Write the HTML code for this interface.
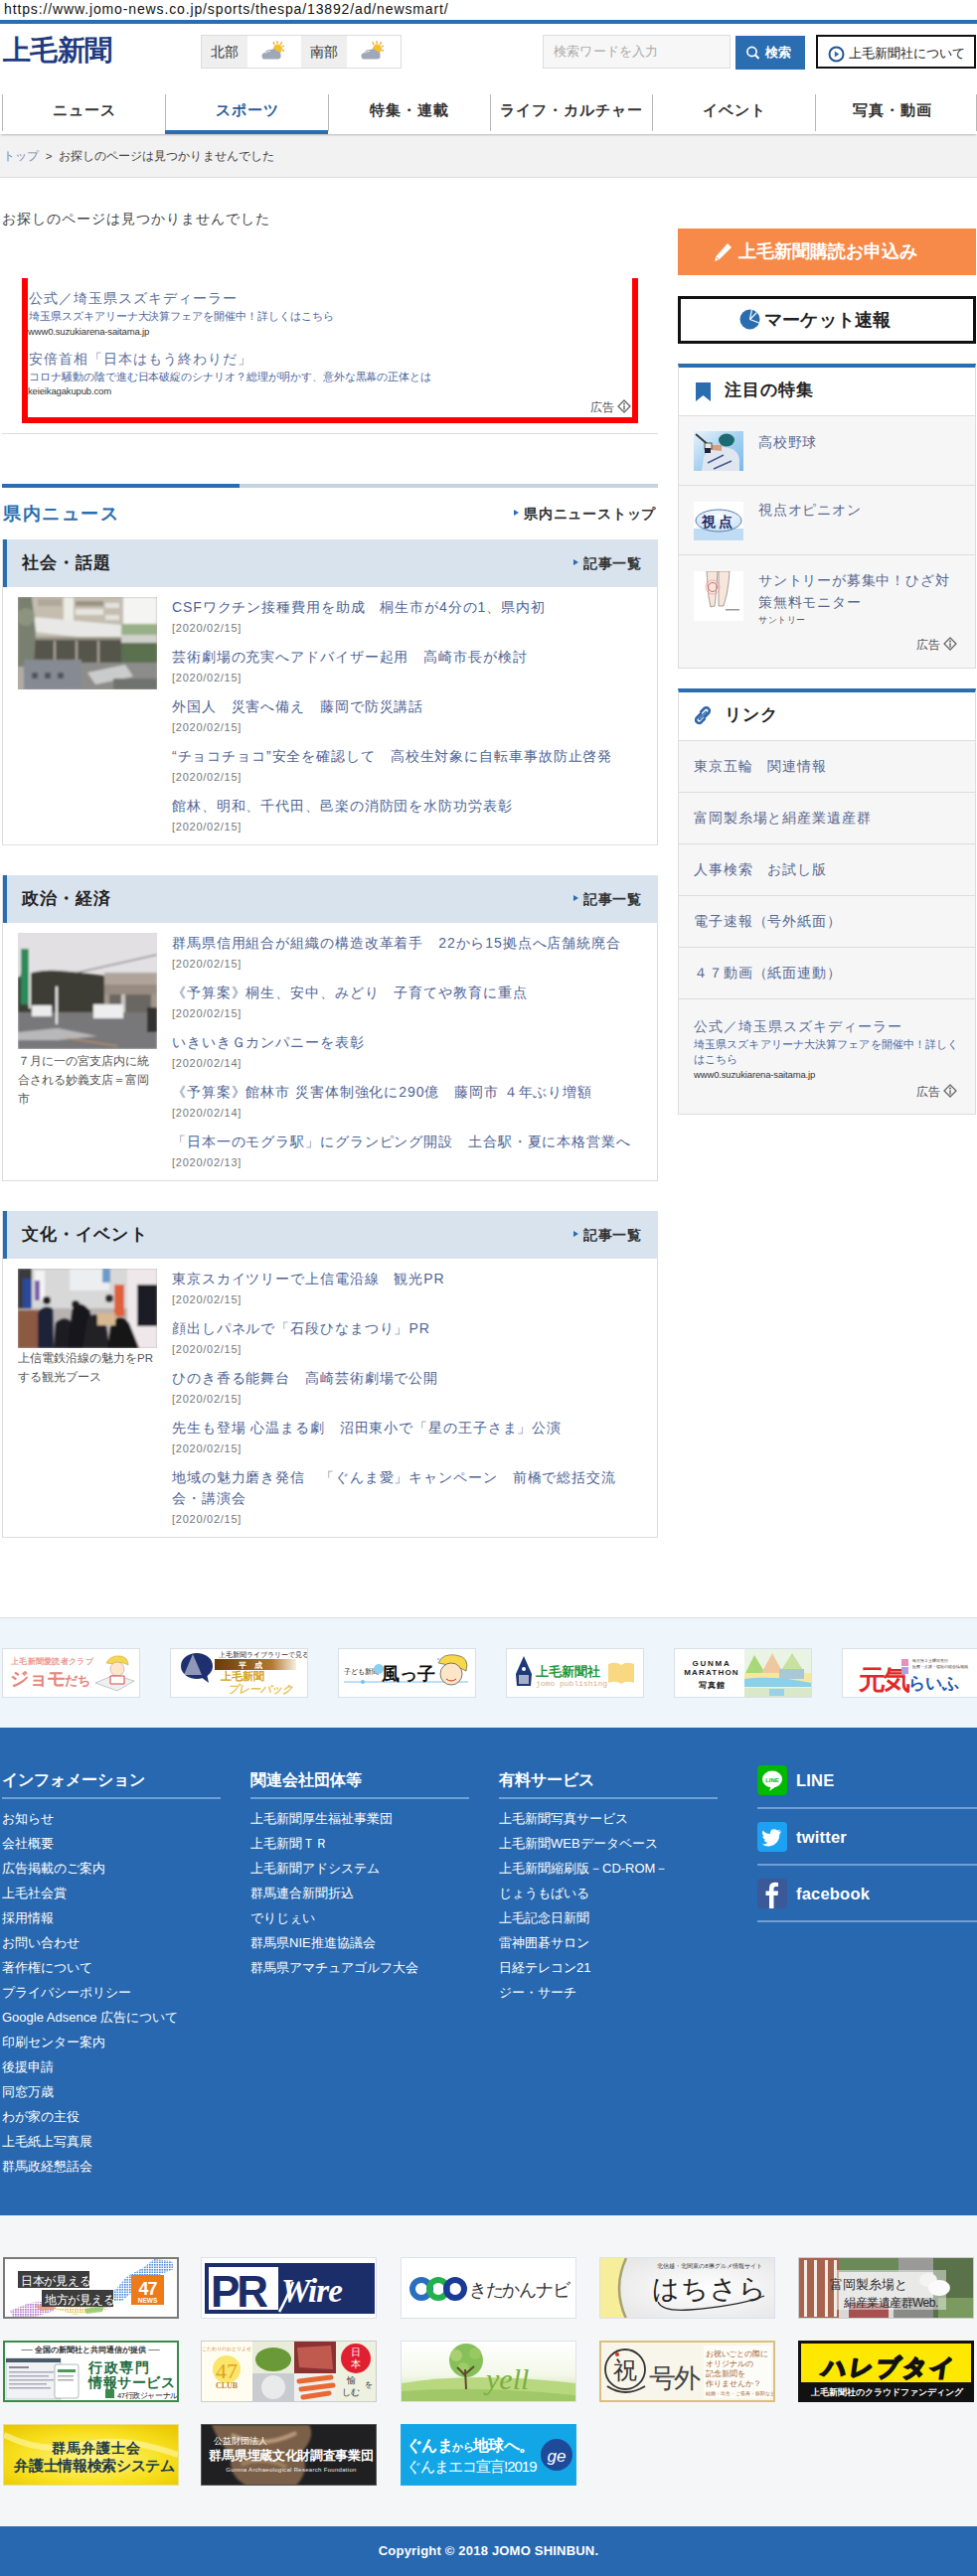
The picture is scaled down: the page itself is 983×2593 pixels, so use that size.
<!DOCTYPE html>
<html lang="ja">
<head>
<meta charset="utf-8">
<style>
*{box-sizing:border-box;margin:0;padding:0}
html,body{width:983px;height:2593px;overflow:hidden;background:#fff}
body{position:relative;font-family:"Liberation Sans",sans-serif;color:#333}
.abs{position:absolute}
a{text-decoration:none;color:inherit}
/* header */
#url{left:4px;top:1px;font-size:14px;color:#111;white-space:nowrap;letter-spacing:.87px}
#topline{left:0;top:20px;width:983px;height:4px;background:#2a6db0}
#logo{left:3px;top:32px;font-size:28px;font-weight:bold;color:#1e3a80;letter-spacing:-.6px;line-height:38px;white-space:nowrap}
#weather{left:202px;top:35px;width:202px;height:34px;border:1px solid #ddd;display:flex}
#weather .lb{width:47px;background:#efefef;font-size:14px;color:#333;text-align:center;line-height:32px}
#weather .ic{width:54px;background:#fff;position:relative}
#search{left:546px;top:35px;width:189px;height:34px;border:1px solid #ddd;background:#f7f7f7;font-size:13px;color:#aaa;padding-left:10px;line-height:32px;letter-spacing:.2px}
#sbtn{left:740px;top:36px;width:70px;height:34px;background:#2a6db0;color:#fff;font-size:13px;font-weight:bold;line-height:34px;padding-left:30px}
#about{left:821px;top:35px;width:161px;height:34px;border:2px solid #111;font-size:13px;color:#222;line-height:33px;padding-left:31px;letter-spacing:0;white-space:nowrap}
/* nav */
#nav{left:0;top:93px;width:983px;height:42px;background:#fff;box-shadow:0 2px 2px -1px rgba(0,0,0,.25);z-index:2}
#nav .it{position:absolute;top:0;height:42px;font-size:15px;font-weight:bold;color:#333;text-align:center;line-height:36px;letter-spacing:1px}
#nav .sep{position:absolute;top:2px;width:1px;height:37px;background:#b8b8b8}
#crumb{left:0;top:135px;width:983px;height:44px;background:#f2f2f2;border-bottom:1px solid #dcdcdc;font-size:11.5px;line-height:44px;padding-left:3px;color:#444;letter-spacing:.05px}
#crumb .t{color:#7a88a8}
#nf{left:2px;top:212px;font-size:14px;color:#444;letter-spacing:1px}

/* main */
#adbox{left:22px;top:280px;width:620px;height:146px;border:6px solid #f00;border-top:none}
.adt{position:absolute;left:1px;font-size:14px;color:#5b6f9b;letter-spacing:1px;white-space:nowrap}
.add{position:absolute;left:1px;font-size:10.5px;color:#4a66a0;letter-spacing:-.05px;white-space:nowrap}
.adu{position:absolute;left:0;font-size:9.5px;color:#333;white-space:nowrap;letter-spacing:-.15px}
.adk{position:absolute;font-size:12px;color:#555;white-space:nowrap}
.iico{display:inline-block;vertical-align:middle}
#hr1{left:2px;top:436px;width:660px;height:1px;background:#ddd}
#tabl{left:2px;top:487px;width:660px;height:4px;background:#c5d3e0}
#tabd{left:2px;top:487px;width:239px;height:4px;background:#2a6db0}
#kn{left:3px;top:505px;font-size:18px;font-weight:bold;color:#2a6db0;letter-spacing:1.5px}
#kntop{left:517px;top:509px;font-size:14px;font-weight:bold;color:#333;letter-spacing:.8px}
.tri{display:inline-block;width:0;height:0;border-left:5px solid #2a6db0;border-top:3.5px solid transparent;border-bottom:3.5px solid transparent;vertical-align:middle;margin-right:5px;position:relative;top:-2px}
.sec{position:absolute;left:2px;width:660px;border:1px solid #ddd;border-top:none;background:#fff}
.sech{position:absolute;left:0;top:0;width:659px;height:48px;background:#d8e3ee;border-left:4px solid #2a6db0}
.sech .ttl{position:absolute;left:15px;top:0;line-height:48px;font-size:17px;font-weight:bold;color:#222;letter-spacing:1.1px}
.sech .more{position:absolute;right:17px;top:0;line-height:48px;font-size:14px;font-weight:bold;color:#333;letter-spacing:.5px}
.ni{position:absolute;left:170px;width:480px}
.ni .t{font-size:14px;color:#4e6495;letter-spacing:.9px;line-height:21px;white-space:nowrap}
.ni .d{font-size:11px;color:#777;line-height:16px;letter-spacing:.75px;padding-top:2px}
.thumb{position:absolute;left:15px;width:140px;overflow:hidden}
.cap{position:absolute;left:15px;width:142px;font-size:11.5px;color:#555;line-height:19px;letter-spacing:0}

/* sidebar */
#sub{left:682px;top:230px;width:300px;height:47px;background:#f78a48;color:#fff;font-size:18px;font-weight:bold;line-height:47px;padding-left:61px;letter-spacing:.05px}
#mkt{left:682px;top:298px;width:300px;height:48px;border:3px solid #111;color:#222;font-size:18px;font-weight:bold;line-height:42px;padding-left:84px;letter-spacing:.2px}
.box{position:absolute;left:682px;width:300px;border:1px solid #ddd;border-top:4px solid #2a6db0;background:#f6f6f7}
.boxh{position:absolute;left:0;top:0;width:298px;height:48px;background:#fff;border-bottom:1px solid #ddd}
.boxh .ttl{position:absolute;left:46px;top:0;line-height:46px;font-size:17px;font-weight:bold;color:#222;letter-spacing:.9px}
.fi{position:absolute;left:0;width:298px;border-bottom:1px solid #ddd}
.fi .im{position:absolute;left:15px;width:50px;overflow:hidden}
.fi .tx{position:absolute;left:80px;font-size:14px;color:#566890;letter-spacing:.8px;line-height:21px}
.li{position:absolute;left:0;width:298px;height:52px;border-bottom:1px solid #ddd;font-size:14px;color:#566890;line-height:50px;padding-left:15px;letter-spacing:.9px}

/* banners strip */
#bstrip{left:0;top:1628px;width:983px;height:111px;background:#eef5fb;border-top:1px solid #d8e2ea}
.bn{position:absolute;top:30px;width:139px;height:50px;background:#fff;border:1px solid #d8e0e8;overflow:hidden}
/* footer */
#foot{left:0;top:1739px;width:983px;height:491px;background:#2868b0;color:#fff}
.fc{position:absolute;top:0;width:220px}
.fc .h{position:absolute;left:0;top:43px;font-size:16px;font-weight:bold;letter-spacing:0;white-space:nowrap}
.fc .ln{position:absolute;left:0;top:70px;width:220px;height:2px;background:#6f9fd6}
.fc ul{position:absolute;left:0;top:79px;list-style:none}
.fc li{font-size:13px;line-height:25px;letter-spacing:0;white-space:nowrap}
.sn{position:absolute;left:762px;width:221px;height:44px;border-bottom:2px solid #6f9fd6}
.sn .ic{position:absolute;left:0;top:0;width:30px;height:30px;border-radius:4px}
.sn .tx{position:absolute;left:39px;top:2px;font-size:16.5px;font-weight:bold;line-height:26px;letter-spacing:.2px}
#gray{left:0;top:2230px;width:983px;height:313px;background:#f5f6f8}
.bb{position:absolute;width:177px;height:62px;overflow:hidden;border:1px solid #dcdcdc;background:#fff}
#copy{left:0;top:2543px;width:983px;height:50px;background:#2868b0;color:#fff;font-size:13px;font-weight:bold;text-align:center;line-height:50px;letter-spacing:.2px;padding-left:0}
</style>
</head>
<body>
<div id="url" class="abs">https://www.jomo-news.co.jp/sports/thespa/13892/ad/newsmart/</div>
<div id="topline" class="abs"></div>
<div id="logo" class="abs">上毛新聞</div>
<div id="weather" class="abs">
  <div class="lb">北部</div><div class="ic"><svg width="54" height="32" viewBox="0 0 54 32"><g stroke="#f0a838" stroke-width="1.3"><line x1="30" y1="5" x2="30" y2="8"/><line x1="34.5" y1="6" x2="33.5" y2="9"/><line x1="26" y1="6" x2="27" y2="9"/><line x1="37" y1="10" x2="35" y2="11"/><line x1="37" y1="15" x2="35" y2="14.5"/></g><circle cx="30.5" cy="13" r="4.5" fill="#f6c030"/><path d="M15 22.5 Q13 18 17.5 17 Q19 13.5 23.5 14 Q27 12 30 15.5 Q34 16 33.5 20 Q34 23 31 23.5 L17 23.5 Q15 23.5 15 22.5 Z" fill="#a0a8b8"/><path d="M18 17.5 Q20 15 23 15.5" stroke="#e8ecf2" stroke-width="1" fill="none"/></svg></div>
  <div class="lb">南部</div><div class="ic"><svg width="54" height="32" viewBox="0 0 54 32"><g stroke="#f0a838" stroke-width="1.3"><line x1="30" y1="5" x2="30" y2="8"/><line x1="34.5" y1="6" x2="33.5" y2="9"/><line x1="26" y1="6" x2="27" y2="9"/><line x1="37" y1="10" x2="35" y2="11"/><line x1="37" y1="15" x2="35" y2="14.5"/></g><circle cx="30.5" cy="13" r="4.5" fill="#f6c030"/><path d="M15 22.5 Q13 18 17.5 17 Q19 13.5 23.5 14 Q27 12 30 15.5 Q34 16 33.5 20 Q34 23 31 23.5 L17 23.5 Q15 23.5 15 22.5 Z" fill="#a0a8b8"/><path d="M18 17.5 Q20 15 23 15.5" stroke="#e8ecf2" stroke-width="1" fill="none"/></svg></div>
</div>
<div id="search" class="abs">検索ワードを入力</div>
<div id="sbtn" class="abs"><svg class="abs" style="left:10px;top:9px" width="17" height="17" viewBox="0 0 17 17"><circle cx="6.5" cy="7" r="4.6" fill="none" stroke="#fff" stroke-width="1.7"/><line x1="10" y1="10.5" x2="13.5" y2="14" stroke="#fff" stroke-width="2"/></svg>検索</div>
<div id="about" class="abs"><svg class="abs" style="left:10px;top:9px" width="17" height="17" viewBox="0 0 17 17"><circle cx="8.5" cy="8.5" r="7" fill="none" stroke="#25558f" stroke-width="2"/><path d="M6.8 5.6 L11.3 8.5 L6.8 11.4 Z" fill="#2a6db0"/></svg>上毛新聞社について</div>

<div id="nav" class="abs">
  <div class="sep" style="left:2px"></div>
  <div class="it" style="left:3px;width:163px">ニュース</div>
  <div class="sep" style="left:166px"></div>
  <div class="it" style="left:167px;width:163px;color:#2a5a9a">スポーツ</div>
  <div class="abs" style="left:166px;top:38px;width:164px;height:4px;background:#2a6db0"></div>
  <div class="sep" style="left:330px"></div>
  <div class="it" style="left:331px;width:162px">特集・連載</div>
  <div class="sep" style="left:493px"></div>
  <div class="it" style="left:494px;width:162px">ライフ・カルチャー</div>
  <div class="sep" style="left:656px"></div>
  <div class="it" style="left:657px;width:163px">イベント</div>
  <div class="sep" style="left:820px"></div>
  <div class="it" style="left:818px;width:159px">写真・動画</div>
  <div class="sep" style="left:982px"></div>
</div>
<div id="crumb" class="abs"><span class="t">トップ</span>&nbsp;&nbsp;&gt;&nbsp;&nbsp;お探しのページは見つかりませんでした</div>
<div id="nf" class="abs">お探しのページは見つかりませんでした</div>


<div id="adbox" class="abs">
  <div class="adt" style="top:12px">公式／埼玉県スズキディーラー</div>
  <div class="add" style="top:32px">埼玉県スズキアリーナ大決算フェアを開催中！詳しくはこちら</div>
  <div class="adu" style="top:48px">www0.suzukiarena-saitama.jp</div>
  <div class="adt" style="top:73px">安倍首相「日本はもう終わりだ」</div>
  <div class="add" style="top:93px">コロナ騒動の陰で進む日本破綻のシナリオ？総理が明かす、意外な黒幕の正体とは</div>
  <div class="adu" style="top:108px">keieikagakupub.com</div>
  <div class="adk" style="left:566px;top:122px">広告 <svg class="iico" width="14" height="14" viewBox="0 0 14 14" style="margin-top:-3px"><path d="M7 1 L13 7 L7 13 L1 7 Z" fill="none" stroke="#666" stroke-width="1.3" stroke-linejoin="round"/><circle cx="7" cy="4.5" r="1" fill="#666"/><rect x="6.3" y="6.2" width="1.4" height="4.5" fill="#666"/></svg></div>
</div>
<div id="hr1" class="abs"></div>
<div id="tabl" class="abs"></div>
<div id="tabd" class="abs"></div>
<div id="kn" class="abs">県内ニュース</div>
<div id="kntop" class="abs"><span class="tri"></span>県内ニューストップ</div>

<!-- section 1 -->
<div class="sec" style="top:543px;height:308px">
  <div class="sech"><div class="ttl">社会・話題</div><div class="more"><span class="tri"></span>記事一覧</div></div>
  <div class="thumb" style="top:58px;height:93px">
    <svg width="140" height="93" viewBox="0 0 140 93"><defs><filter id="b1" x="0" y="0" width="100%" height="100%"><feGaussianBlur stdDeviation="0.9"/></filter></defs>
      <rect width="140" height="93" fill="#b0aca4"/>
      <g filter="url(#b1)">
      <rect x="100" y="0" width="40" height="40" fill="#f4f4f2"/>
      <rect x="0" y="0" width="106" height="42" fill="#c4bdb0"/>
      <rect x="46" y="0" width="10" height="30" fill="#ecebe6"/>
      <rect x="20" y="2" width="24" height="7" fill="#b0a898"/>
      <rect x="58" y="4" width="28" height="5" fill="#9a9282"/>
      <rect x="58" y="12" width="28" height="6" fill="#e6e4de"/>
      <rect x="88" y="6" width="14" height="5" fill="#e4e2dc"/>
      <rect x="88" y="18" width="14" height="5" fill="#e4e2dc"/>
      <path d="M16 20 L104 28 L104 45 L16 35 Z" fill="#e8e8e6"/>
      <rect x="14" y="40" width="92" height="27" fill="#57544c"/>
      <rect x="16" y="40" width="88" height="3" fill="#9a958a"/>
      <rect x="36" y="44" width="2" height="24" fill="#aaa69c"/>
      <rect x="58" y="44" width="2" height="24" fill="#aaa69c"/>
      <rect x="80" y="44" width="2" height="24" fill="#aaa69c"/>
      <rect x="104" y="38" width="36" height="8" fill="#d0d0cc"/>
      <rect x="104" y="46" width="36" height="24" fill="#5a7050"/>
      <rect x="104" y="27" width="36" height="11" fill="#98b088"/>
      <path d="M0 0 L14 0 L18 35 L16 70 L0 70 Z" fill="#7a8070"/>
      <circle cx="8" cy="20" r="9" fill="#8c9480"/>
      <rect x="6" y="63" width="58" height="30" fill="#868a92"/>
      <rect x="14" y="76" width="6" height="6" fill="#505460"/><rect x="27" y="76" width="6" height="6" fill="#505460"/><rect x="40" y="76" width="6" height="6" fill="#505460"/>
      <rect x="64" y="66" width="76" height="27" fill="#8c8c8a"/>
      <path d="M70 76 L108 68 L116 80 L78 88 Z" fill="#cacccc"/>
      <rect x="96" y="82" width="44" height="11" fill="#707270"/>
      </g></svg>
  </div>
  <div class="ni" style="top:58px"><div class="t">CSFワクチン接種費用を助成　桐生市が4分の1、県内初</div><div class="d">[2020/02/15]</div></div>
  <div class="ni" style="top:108px"><div class="t">芸術劇場の充実へアドバイザー起用　高崎市長が検討</div><div class="d">[2020/02/15]</div></div>
  <div class="ni" style="top:158px"><div class="t">外国人　災害へ備え　藤岡で防災講話</div><div class="d">[2020/02/15]</div></div>
  <div class="ni" style="top:208px"><div class="t">“チョコチョコ”安全を確認して　高校生対象に自転車事故防止啓発</div><div class="d">[2020/02/15]</div></div>
  <div class="ni" style="top:258px"><div class="t">館林、明和、千代田、邑楽の消防団を水防功労表彰</div><div class="d">[2020/02/15]</div></div>
</div>

<!-- section 2 -->
<div class="sec" style="top:881px;height:308px">
  <div class="sech"><div class="ttl">政治・経済</div><div class="more"><span class="tri"></span>記事一覧</div></div>
  <div class="thumb" style="top:58px;height:117px">
    <svg width="140" height="117" viewBox="0 0 140 117"><defs><filter id="b2" x="0" y="0" width="100%" height="100%"><feGaussianBlur stdDeviation="0.8"/></filter></defs>
      <rect width="140" height="117" fill="#dedcde"/>
      <g filter="url(#b2)">
      <rect width="140" height="40" fill="#e2e0e2"/>
      <path d="M60 40 L140 22" stroke="#555" stroke-width="1"/>
      <path d="M0 45 Q20 36 40 38 Q70 40 105 46 L105 82 L0 82 Z" fill="#3c3d36"/>
      <rect x="87" y="40" width="53" height="47" fill="#a2968c"/>
      <rect x="87" y="40" width="53" height="12" fill="#b0a49a"/>
      <rect x="87" y="52" width="53" height="10" fill="#988c82"/>
      <rect x="92" y="62" width="42" height="25" fill="#6a6662"/>
      <rect x="104" y="62" width="4" height="25" fill="#c8c4c0"/>
      <rect x="3" y="16" width="10" height="56" fill="#2a8a5a"/>
      <rect x="11" y="16" width="2" height="60" fill="#e8e8e8"/>
      <rect x="0" y="80" width="140" height="37" fill="#78787a"/>
      <rect x="14" y="73" width="20" height="11" fill="#ececec"/>
      <rect x="76" y="72" width="30" height="14" fill="#eeeeee"/>
      <rect x="38" y="54" width="2" height="38" fill="#f0f0f0"/>
      <path d="M0 100 L40 96 L80 104 L40 108 L0 108 Z" fill="#b8b8ba"/>
      <path d="M50 106 L100 114" stroke="#c89a60" stroke-width="1.2"/>
      <rect x="130" y="75" width="10" height="25" fill="#333"/>
      </g></svg>
  </div>
  <div class="cap" style="top:178px">７月に一の宮支店内に統合される妙義支店＝富岡市</div>
  <div class="ni" style="top:58px"><div class="t">群馬県信用組合が組織の構造改革着手　22から15拠点へ店舗統廃合</div><div class="d">[2020/02/15]</div></div>
  <div class="ni" style="top:108px"><div class="t">《予算案》桐生、安中、みどり　子育てや教育に重点</div><div class="d">[2020/02/15]</div></div>
  <div class="ni" style="top:158px"><div class="t">いきいきＧカンパニーを表彰</div><div class="d">[2020/02/14]</div></div>
  <div class="ni" style="top:208px"><div class="t">《予算案》館林市 災害体制強化に290億　藤岡市 ４年ぶり増額</div><div class="d">[2020/02/14]</div></div>
  <div class="ni" style="top:258px"><div class="t">「日本一のモグラ駅」にグランピング開設　土合駅・夏に本格営業へ</div><div class="d">[2020/02/13]</div></div>
</div>

<!-- section 3 -->
<div class="sec" style="top:1219px;height:329px">
  <div class="sech"><div class="ttl">文化・イベント</div><div class="more"><span class="tri"></span>記事一覧</div></div>
  <div class="thumb" style="top:58px;height:80px">
    <svg width="140" height="80" viewBox="0 0 140 80"><defs><filter id="b3" x="0" y="0" width="100%" height="100%"><feGaussianBlur stdDeviation="0.8"/></filter></defs>
      <rect width="140" height="80" fill="#b8b2b0"/>
      <g filter="url(#b3)">
      <rect x="0" y="0" width="140" height="40" fill="#d8d8d8"/>
      <rect x="0" y="0" width="14" height="40" fill="#3a3a3c"/>
      <rect x="17" y="2" width="10" height="30" fill="#f4f4f4"/>
      <rect x="52" y="0" width="40" height="22" fill="#eceef0"/>
      <rect x="85" y="0" width="8" height="14" fill="#6a9ac8"/>
      <rect x="110" y="0" width="30" height="80" fill="#eee8ea"/>
      <rect x="120" y="16" width="20" height="42" fill="#1c1e28"/>
      <rect x="5" y="10" width="9" height="30" fill="#2a4a9a"/>
      <rect x="17" y="12" width="5" height="20" fill="#7a5aa8"/>
      <rect x="97" y="16" width="10" height="32" fill="#e0603a"/>
      <rect x="0" y="42" width="25" height="38" fill="#8c5a42"/>
      <path d="M20 80 L20 45 Q25 35 35 40 L36 80 Z" fill="#1e2438"/>
      <path d="M36 80 L38 55 Q47 46 55 55 L56 80 Z" fill="#1a1c24"/>
      <path d="M50 80 L55 40 Q63 30 72 42 L80 80 Z" fill="#15161a"/>
      <path d="M65 80 L70 50 Q78 42 88 52 L92 80 Z" fill="#202026"/>
      <path d="M90 80 L94 55 Q103 44 112 55 L122 80 Z" fill="#141418"/>
      <rect x="80" y="45" width="18" height="12" fill="#d8b890"/>
      <circle cx="92" cy="30" r="4" fill="#2a2a2a"/>
      <circle cx="58" cy="36" r="4" fill="#1e1e1e"/>
      <circle cx="29" cy="32" r="4" fill="#1e1e1e"/>
      </g></svg>
  </div>
  <div class="cap" style="top:139px">上信電鉄沿線の魅力をPRする観光ブース</div>
  <div class="ni" style="top:58px"><div class="t">東京スカイツリーで上信電沿線　観光PR</div><div class="d">[2020/02/15]</div></div>
  <div class="ni" style="top:108px"><div class="t">顔出しパネルで「石段ひなまつり」PR</div><div class="d">[2020/02/15]</div></div>
  <div class="ni" style="top:158px"><div class="t">ひのき香る能舞台　高崎芸術劇場で公開</div><div class="d">[2020/02/15]</div></div>
  <div class="ni" style="top:208px"><div class="t">先生も登場 心温まる劇　沼田東小で「星の王子さま」公演</div><div class="d">[2020/02/15]</div></div>
  <div class="ni" style="top:258px"><div class="t">地域の魅力磨き発信　「ぐんま愛」キャンペーン　前橋で総括交流<br>会・講演会</div><div class="d">[2020/02/15]</div></div>
</div>

<!-- sidebar -->
<div id="sub" class="abs"><svg class="abs" style="left:36px;top:14px" width="19" height="20" viewBox="0 0 19 20"><path d="M14 1 L18 5 L6 17 L1 19 L2.5 14 Z" fill="#fff"/><path d="M3 15 L5 17" stroke="#f78a48" stroke-width="1"/></svg>上毛新聞購読お申込み</div>
<div id="mkt" class="abs"><svg class="abs" style="left:59px;top:10px" width="21" height="21" viewBox="0 0 21 21"><circle cx="10.5" cy="10.5" r="10" fill="#2a6db0"/><path d="M10.5 10.5 L12.5 0.7 M10.5 10.5 L17.5 3.5 M10.5 10.5 L19.8 14" stroke="#fff" stroke-width="1.2" fill="none"/></svg>マーケット速報</div>

<div class="box" style="top:366px;height:307px">
  <div class="boxh" style="height:49px"><svg class="abs" style="left:17px;top:15px" width="15" height="19" viewBox="0 0 15 19"><path d="M0 0 H15 V19 L7.5 13 L0 19 Z" fill="#2a6db0"/></svg><div class="ttl">注目の特集</div></div>
  <div class="fi" style="top:49px;height:70px">
    <div class="im" style="top:15px;height:40px"><svg width="50" height="40" viewBox="0 0 50 40"><defs><linearGradient id="sky" x1="0" y1="0" x2="1" y2="1"><stop offset="0" stop-color="#e8f2fa"/><stop offset=".5" stop-color="#a8d2f0"/><stop offset="1" stop-color="#7ab8ea"/></linearGradient><filter id="b4"><feGaussianBlur stdDeviation="0.5"/></filter></defs><rect width="50" height="40" fill="url(#sky)"/><g filter="url(#b4)"><path d="M8 40 L10 26 Q16 16 30 16 Q44 17 46 28 L46 40 Z" fill="#e0e6f0"/><path d="M14 32 L30 24 M20 38 L38 30" stroke="#4a5a8a" stroke-width="1.5"/><ellipse cx="33" cy="9" rx="8" ry="6.5" fill="#1e6a72"/><path d="M18 14 L28 14 L28 20 L18 19 Z" fill="#d8a080"/><path d="M2 3 L16 15" stroke="#3a3a3a" stroke-width="2"/><rect x="11" y="12" width="7" height="6" fill="#e8e8e8" stroke="#333" stroke-width=".8"/><rect x="11" y="17" width="6" height="5" fill="#223"/></g></svg></div>
    <div class="tx" style="top:16px">高校野球</div>
  </div>
  <div class="fi" style="top:119px;height:70px">
    <div class="im" style="top:16px;height:39px"><svg width="50" height="39" viewBox="0 0 50 39"><defs><radialGradient id="ov" cx=".5" cy=".3" r=".7"><stop offset="0" stop-color="#fafdff"/><stop offset="1" stop-color="#c8e0f4"/></radialGradient></defs><rect width="50" height="39" fill="#fff"/><rect x="0" y="27" width="50" height="12" fill="#c0dcf4"/><ellipse cx="25" cy="19" rx="23" ry="11" fill="url(#ov)" stroke="#5a80b0" stroke-width="1"/><text x="25" y="25" font-size="14" font-weight="bold" fill="#1e2a66" text-anchor="middle" font-family="Liberation Serif" letter-spacing="3">視点</text></svg></div>
    <div class="tx" style="top:14px">視点オピニオン</div>
  </div>
  <div class="fi" style="top:189px;height:114px;border-bottom:none">
    <div class="im" style="top:16px;height:50px"><svg width="50" height="50" viewBox="0 0 50 50"><rect width="50" height="50" fill="#fff"/><path d="M13 0 L24 0 L23 14 L22 26 L21 35 L17 36 L15 26 L14 14 Z" fill="#f6e6dc" stroke="#8a7a70" stroke-width=".7"/><path d="M25 0 L36 0 L35 12 L33 24 L30 35 L25 35 L25 24 Z" fill="#f6e6dc" stroke="#8a7a70" stroke-width=".7"/><circle cx="19" cy="16" r="7" fill="none" stroke="#f0a0a0" stroke-width=".8"/><circle cx="19" cy="16" r="4.5" fill="none" stroke="#e06868" stroke-width="1"/><rect x="32" y="38" width="14" height="1.5" fill="#999"/></svg></div>
    <div class="tx" style="top:14px;width:200px;line-height:22px">サントリーが募集中！ひざ対策無料モニター</div>
    <div class="abs" style="left:80px;top:59px;font-size:9px;color:#555;letter-spacing:.5px">サントリー</div>
    <div class="adk" style="left:239px;top:82px">広告 <svg class="iico" width="14" height="14" viewBox="0 0 14 14" style="margin-top:-3px"><path d="M7 1 L13 7 L7 13 L1 7 Z" fill="none" stroke="#666" stroke-width="1.3" stroke-linejoin="round"/><circle cx="7" cy="4.5" r="1" fill="#666"/><rect x="6.3" y="6.2" width="1.4" height="4.5" fill="#666"/></svg></div>
  </div>
</div>

<div class="box" style="top:693px;height:429px">
  <div class="boxh" style="height:49px"><svg class="abs" style="left:13px;top:12px" width="22" height="22" viewBox="0 0 20 20"><g fill="none" stroke="#2f66a8" stroke-width="2.4" stroke-linecap="round"><path d="M8.2 8.6 L4.6 12.2 A2.9 2.9 0 0 0 8.7 16.3 L11.6 13.4"/><path d="M12 11.4 L15.4 8 A2.9 2.9 0 0 0 11.3 3.9 L8.4 6.8"/><path d="M7.2 13.2 L13 7.4" stroke-width="2.6"/></g><path d="M7.3 13.1 L12.9 7.5" stroke="#bfe0ff" stroke-width=".6"/></svg><div class="ttl" style="left:46px">リンク</div></div>
  <div class="li" style="top:49px">東京五輪　関連情報</div>
  <div class="li" style="top:101px">富岡製糸場と絹産業遺産群</div>
  <div class="li" style="top:153px">人事検索　お試し版</div>
  <div class="li" style="top:205px">電子速報（号外紙面）</div>
  <div class="li" style="top:257px">４７動画（紙面連動）</div>
  <div class="fi" style="top:309px;height:116px;border-bottom:none">
    <div class="adt" style="left:15px;top:19px;color:#5b6f9b">公式／埼玉県スズキディーラー</div>
    <div class="add" style="left:15px;top:38px;line-height:15px;letter-spacing:.1px">埼玉県スズキアリーナ大決算フェアを開催中！詳しく<br>はこちら</div>
    <div class="adu" style="left:15px;top:70px">www0.suzukiarena-saitama.jp</div>
    <div class="adk" style="left:239px;top:85px">広告 <svg class="iico" width="14" height="14" viewBox="0 0 14 14" style="margin-top:-3px"><path d="M7 1 L13 7 L7 13 L1 7 Z" fill="none" stroke="#666" stroke-width="1.3" stroke-linejoin="round"/><circle cx="7" cy="4.5" r="1" fill="#666"/><rect x="6.3" y="6.2" width="1.4" height="4.5" fill="#666"/></svg></div>
  </div>
</div>

<!-- banner strip -->
<div id="bstrip" class="abs">
  <div class="bn" style="left:2px"><svg width="137" height="48" viewBox="0 0 137 48">
    <text x="8" y="15" font-size="7.5" font-weight="bold" fill="#ec9a90" letter-spacing=".3">上毛新聞愛読者クラブ</text>
    <text x="7" y="36" font-size="19" font-weight="bold" fill="#e8847a" letter-spacing="-.5">ジョモ</text>
    <text x="62" y="36" font-size="13" font-weight="bold" fill="#e8847a">だち</text>
    <path d="M93 34 L112 26 L132 32 L115 42 Z" fill="#eef0f2" stroke="#9aa" stroke-width=".6"/>
    <path d="M104 14 Q108 6 118 7 Q126 8 126 16 Q120 12 112 15 Z" fill="#f6d850" stroke="#c9a030" stroke-width=".6"/>
    <ellipse cx="115" cy="20" rx="7" ry="7" fill="#fde6cc" stroke="#b88" stroke-width=".5"/>
    <path d="M108 27 L122 27 L122 35 L108 35 Z" fill="#fff" stroke="#d44" stroke-width="1"/>
  </svg></div>
  <div class="bn" style="left:171px"><svg width="137" height="48" viewBox="0 0 137 48"><defs><linearGradient id="brn" x1="0" x2="1"><stop offset="0" stop-color="#6a3a08"/><stop offset=".7" stop-color="#b07a30"/><stop offset="1" stop-color="#f8f0e0"/></linearGradient></defs>
    <ellipse cx="26" cy="17" rx="16" ry="13" fill="#1e3070"/><path d="M30 28 L38 34 L36 25 Z" fill="#1e3070"/>
    <path d="M22 5 L31 26 L13 26 Z" fill="#fff" opacity=".5"/>
    <text x="48" y="8" font-size="7" fill="#222" font-family="Liberation Serif">上毛新聞ライブラリーで見る</text>
    <rect x="44" y="10" width="82" height="11" fill="url(#brn)"/>
    <text x="80" y="19" font-size="7.5" fill="#fff" text-anchor="middle" font-weight="bold">平　成</text>
    <text x="50" y="31" font-size="11" font-weight="bold" fill="#d4a020">上毛新聞</text>
    <text x="57" y="44" font-size="11" font-weight="bold" fill="#e8c050" font-style="italic">プレーバック</text>
  </svg></div>
  <div class="bn" style="left:340px"><svg width="137" height="48" viewBox="0 0 137 48">
    <line x1="5" y1="33" x2="130" y2="33" stroke="#7ac0ec" stroke-width="1"/>
    <circle cx="24" cy="33" r="2" fill="#7ac0ec"/><circle cx="100" cy="10" r="1" fill="#7ac0ec"/><circle cx="128" cy="14" r="1" fill="#7ac0ec"/>
    <text x="5" y="25" font-size="7" fill="#222">子ども新聞</text>
    <circle cx="40" cy="20" r="5" fill="#8ad0f0"/>
    <text x="43" y="31" font-size="18" font-weight="bold" fill="#111">風っ子</text>
    <path d="M100 14 Q104 4 118 6 Q132 8 128 22 L120 18 Z" fill="#f8d848" stroke="#444" stroke-width=".6"/>
    <ellipse cx="113" cy="25" rx="11" ry="11" fill="#fde6c8" stroke="#444" stroke-width=".7"/>
    <path d="M108 30 Q113 34 118 30" stroke="#c33" stroke-width="1" fill="none"/>
  </svg></div>
  <div class="bn" style="left:509px"><svg width="137" height="48" viewBox="0 0 137 48">
    <path d="M17 7 L25 25 L24 37 L10 37 L9 25 Z" fill="#1e3878"/>
    <rect x="12" y="26" width="10" height="9" fill="#fff" opacity=".6"/><circle cx="17" cy="20" r="2" fill="#fff"/>
    <text x="29" y="27" font-size="13" font-weight="bold" fill="#1a9a3a">上毛新聞社</text>
    <text x="29" y="37" font-size="8" fill="#d8b088" font-family="Liberation Mono">jomo publishing</text>
    <path d="M102 15 Q110 12 115 16 Q120 12 128 15 L128 34 Q120 31 115 35 Q110 31 102 34 Z" fill="#f8d880"/>
  </svg></div>
  <div class="bn" style="left:678px"><svg width="137" height="48" viewBox="0 0 137 48">
    <text x="37" y="17" font-size="8" font-weight="bold" fill="#222" text-anchor="middle" letter-spacing="1.8">GUNMA</text>
    <text x="37" y="26" font-size="8" font-weight="bold" fill="#222" text-anchor="middle" letter-spacing="1.2">MARATHON</text>
    <text x="37" y="39" font-size="7.5" font-weight="bold" fill="#222" text-anchor="middle" letter-spacing="1">写真館</text>
    <rect x="70" y="0" width="67" height="48" fill="#eaf4e4"/>
    <path d="M70 26 L80 6 L92 26 Z" fill="#a8d878"/><path d="M86 26 L98 4 L110 26 Z" fill="#f0c8a0"/><path d="M104 26 L118 4 L132 26 Z" fill="#c8e0a0"/>
    <rect x="70" y="24" width="67" height="14" fill="#f4e8a0"/>
    <path d="M70 30 Q100 26 137 34 L137 38 L70 38 Z" fill="#8ad0e8"/>
    <rect x="105" y="20" width="25" height="10" fill="#a8c8d8"/>
    <rect x="70" y="39" width="67" height="9" fill="#d8e8c8"/><rect x="95" y="40" width="15" height="7" fill="#9ad0e8"/>
  </svg></div>
  <div class="bn" style="left:847px"><svg width="137" height="48" viewBox="0 0 137 48">
    <text x="16" y="40" font-size="27" font-weight="bold" fill="#e02828" letter-spacing="-2">元気</text>
    <rect x="59" y="10" width="7" height="7" fill="#e890b8"/><rect x="59" y="18" width="7" height="7" fill="#b0a0e0"/>
    <text x="66" y="40" font-size="17" font-weight="bold" fill="#1a5ab0">らいふ</text>
    <text x="70" y="13" font-size="4" fill="#333">毎月第２土曜日発行</text>
    <text x="70" y="19" font-size="4" fill="#333">医療・介護・福祉の総合情報紙</text>
  </svg></div>
</div>

<!-- footer -->
<div id="foot" class="abs">
  <div class="fc" style="left:2px"><div class="h">インフォメーション</div><div class="ln"></div>
    <ul><li>お知らせ</li><li>会社概要</li><li>広告掲載のご案内</li><li>上毛社会賞</li><li>採用情報</li><li>お問い合わせ</li><li>著作権について</li><li>プライバシーポリシー</li><li>Google Adsence 広告について</li><li>印刷センター案内</li><li>後援申請</li><li>同窓万歳</li><li>わが家の主役</li><li>上毛紙上写真展</li><li>群馬政経懇話会</li></ul></div>
  <div class="fc" style="left:252px"><div class="h">関連会社団体等</div><div class="ln"></div>
    <ul><li>上毛新聞厚生福祉事業団</li><li>上毛新聞ＴＲ</li><li>上毛新聞アドシステム</li><li>群馬連合新聞折込</li><li>でりじぇい</li><li>群馬県NIE推進協議会</li><li>群馬県アマチュアゴルフ大会</li></ul></div>
  <div class="fc" style="left:502px"><div class="h">有料サービス</div><div class="ln"></div>
    <ul><li>上毛新聞写真サービス</li><li>上毛新聞WEBデータベース</li><li>上毛新聞縮刷版－CD-ROM－</li><li>じょうもばいる</li><li>上毛記念日新聞</li><li>雷神囲碁サロン</li><li>日経テレコン21</li><li>ジー・サーチ</li></ul></div>
  <div class="sn" style="top:38px"><div class="ic" style="background:#00b900"><svg width="30" height="30" viewBox="0 0 30 30"><ellipse cx="15" cy="14" rx="10" ry="8.5" fill="#fff"/><path d="M14 21 L12 26 L19 21 Z" fill="#fff"/><text x="15" y="16.5" font-size="6" font-weight="bold" fill="#00b900" text-anchor="middle">LINE</text></svg></div><div class="tx">LINE</div></div>
  <div class="sn" style="top:95px"><div class="ic" style="background:#1da1f2"><svg width="30" height="30" viewBox="0 0 30 30"><path d="M24 9 Q22.5 10 21 10 Q22.5 9 23 7.5 Q21.5 8.3 20 8.6 Q18 6.5 15 7.5 Q12.5 9 13 12 Q8.5 12 5.5 8.5 Q4 12 7 14.5 Q6 14.5 5.3 14 Q5.5 17 8.5 18 Q7.5 18.3 6.5 18 Q7.5 20.5 10.5 20.8 Q8 23 4.8 22.5 Q8.5 25 13 24.3 Q22 22.5 22.5 12 Q23.5 11 24 9 Z" fill="#fff"/></svg></div><div class="tx">twitter</div></div>
  <div class="sn" style="top:152px"><div class="ic" style="background:#3b5998"><svg width="30" height="30" viewBox="0 0 30 30"><path d="M16.5 30 V17 H20.5 L21 12.5 H16.5 V10 Q16.5 8 18.5 8 H21 V4 Q19 3.8 17.5 3.8 Q12 4 12 9.5 V12.5 H8.5 V17 H12 V30 Z" fill="#fff"/></svg></div><div class="tx">facebook</div></div>
</div>

<!-- bottom banners -->
<div id="gray" class="abs">
  <div class="bb" style="left:3px;top:42px;border:2px solid #7a7a7a"><svg width="173" height="59" viewBox="0 0 173 59"><defs><pattern id="dots" width="2.5" height="2.5" patternUnits="userSpaceOnUse"><rect width="1.6" height="1.6" fill="#4a8ad8"/></pattern><pattern id="dots2" width="2.5" height="2.5" patternUnits="userSpaceOnUse"><rect width="1.6" height="1.6" fill="#b070d0"/></pattern><pattern id="dots3" width="2.5" height="2.5" patternUnits="userSpaceOnUse"><rect width="1.6" height="1.6" fill="#e0c040"/></pattern></defs>
    <rect width="173" height="59" fill="#fff"/>
    <path d="M95 42 L112 30 L122 18 L140 8 L150 0 L168 2 L170 10 L150 18 L132 30 L118 42 Z" fill="url(#dots)"/>
    <path d="M5 52 L25 44 L45 42 L50 52 L30 58 L8 58 Z" fill="url(#dots2)"/>
    <path d="M50 50 L75 46 L95 44 L110 40 L105 50 L70 56 Z" fill="url(#dots3)"/>
    <path d="M30 47 L48 44 L52 50 L36 52 Z" fill="#e89060" opacity=".7"/>
    <path d="M80 50 L100 47 L98 53 L82 55 Z" fill="#8ac860" opacity=".8"/>
    <rect x="13" y="12" width="72" height="17" fill="#3c3c3c"/><text x="16" y="25.5" font-size="12" fill="#fff" letter-spacing="-.3">日本が見える</text>
    <rect x="37" y="31" width="72" height="17" fill="#3c3c3c"/><text x="40" y="44.5" font-size="12" fill="#fff" letter-spacing="-.3">地方が見える</text>
    <rect x="127" y="16" width="33" height="30" fill="#ef7a1a"/><text x="143.5" y="36" font-size="18" font-weight="bold" fill="#fff" text-anchor="middle" letter-spacing="-1">47</text><text x="143.5" y="44" font-size="6.5" font-weight="bold" fill="#fff" text-anchor="middle">NEWS</text>
  </svg></div>
  <div class="bb" style="left:202px;top:42px;border:1px solid #dde2ea"><svg width="175" height="61" viewBox="0 0 175 61">
    <rect x="3" y="5" width="171" height="51" fill="#1c2e6a"/>
    <rect x="7" y="9" width="70" height="43" fill="#fff"/>
    <text x="9" y="49" font-size="44" font-weight="bold" fill="#1c2e6a" letter-spacing="-3">PR</text>
    <text x="80" y="44" font-size="33" font-style="italic" font-weight="bold" fill="#fff" font-family="Liberation Serif" letter-spacing="-1">Wire</text>
    <path d="M78 54 Q84 44 92 24" stroke="#fff" stroke-width="2.5" fill="none"/>
  </svg></div>
  <div class="bb" style="left:403px;top:42px;border:1px solid #dde2ea"><svg width="175" height="61" viewBox="0 0 175 61">
    <circle cx="20" cy="31" r="9" fill="none" stroke="#2a6ec0" stroke-width="6"/>
    <circle cx="37" cy="31" r="9" fill="none" stroke="#22b04a" stroke-width="6"/>
    <circle cx="54" cy="31" r="9" fill="none" stroke="#1a3a98" stroke-width="6"/>
    <text x="68" y="38" font-size="18" fill="#333" letter-spacing="-1.3">きたかんナビ</text>
  </svg></div>
  <div class="bb" style="left:603px;top:42px;border:1px solid #dde2ea"><svg width="175" height="61" viewBox="0 0 175 61"><defs><radialGradient id="hg" cx=".6" cy=".5" r=".6"><stop offset="0" stop-color="#fff"/><stop offset="1" stop-color="#e8e8e8"/></radialGradient></defs>
    <rect width="175" height="61" fill="url(#hg)"/>
    <path d="M0 0 H26 Q12 30 26 61 H0 Z" fill="#f6ee9a"/>
    <path d="M26 0 Q12 30 26 61" stroke="#a8a070" stroke-width="2.5" fill="none"/>
    <text x="110" y="10" font-size="6" fill="#333" text-anchor="middle">北信越・北関東の8県グルメ情報サイト</text>
    <text x="110" y="40" font-size="27" fill="#222" text-anchor="middle" letter-spacing="1">はちさら</text>
    <path d="M58 44 Q62 54 90 52 Q140 48 165 38" stroke="#222" stroke-width="1.3" fill="none"/>
  </svg></div>
  <div class="bb" style="left:803px;top:42px;border:1px solid #ccc"><svg width="175" height="61" viewBox="0 0 175 61"><defs><filter id="b5"><feGaussianBlur stdDeviation=".6"/></filter></defs>
    <g filter="url(#b5)">
    <rect width="175" height="61" fill="#b8b8b4"/>
    <rect x="0" y="0" width="40" height="61" fill="#a86450"/>
    <rect x="5" y="2" width="3" height="57" fill="#f0ece6"/><rect x="15" y="2" width="3" height="57" fill="#f0ece6"/><rect x="26" y="2" width="3" height="57" fill="#f0ece6"/><rect x="35" y="2" width="3" height="57" fill="#f0ece6"/>
    <rect x="40" y="0" width="60" height="14" fill="#6a8a5a"/>
    <rect x="40" y="14" width="100" height="47" fill="#d8d8d6"/>
    <rect x="50" y="45" width="40" height="16" fill="#a85050"/>
    <rect x="95" y="40" width="45" height="21" fill="#8a8a88"/>
    <rect x="100" y="0" width="40" height="14" fill="#9a9a98"/>
    <rect x="135" y="0" width="40" height="61" fill="#5a7248"/>
    <rect x="140" y="40" width="35" height="21" fill="#7a9a60"/>
    <rect x="38" y="12" width="110" height="40" fill="#fff" opacity=".45"/><ellipse cx="130" cy="22" rx="9" ry="7" fill="#f4f4f4"/><ellipse cx="141" cy="30" rx="11" ry="8" fill="#fafafa"/>
    </g>
    <text x="31" y="31" font-size="12.5" fill="#2a2a2a">富岡製糸場と</text>
    <text x="45" y="49" font-size="12" fill="#2a2a2a" letter-spacing="-.5">絹産業遺産群Web.</text>
  </svg></div>

  <div class="bb" style="left:3px;top:126px;border:2px solid #3a8a4a"><svg width="173" height="59" viewBox="0 0 173 59">
    <rect width="173" height="59" fill="#fff"/>
    <text x="86" y="10" font-size="8" font-weight="bold" fill="#333" text-anchor="middle">── 全国の新聞社と共同通信が提供 ──</text>
    <rect x="1" y="16" width="55" height="41" fill="#f0f2f4" stroke="#9aa" stroke-width=".6"/>
    <rect x="1" y="16" width="55" height="4" fill="#4a5a6a"/>
    <rect x="4" y="24" width="20" height="2" fill="#889"/><rect x="4" y="29" width="45" height="1.5" fill="#aab"/><rect x="4" y="33" width="40" height="1.5" fill="#aab"/><rect x="4" y="37" width="45" height="1.5" fill="#aab"/><rect x="4" y="41" width="38" height="1.5" fill="#aab"/><rect x="4" y="45" width="42" height="1.5" fill="#aab"/>
    <rect x="50" y="22" width="24" height="34" rx="2" fill="#fff" stroke="#9aa" stroke-width=".8"/>
    <rect x="53" y="27" width="18" height="3" fill="#4a9a5a"/><rect x="53" y="33" width="16" height="1.5" fill="#aab"/><rect x="53" y="37" width="16" height="1.5" fill="#aab"/>
    <text x="84" y="30" font-size="13.5" font-weight="bold" fill="#1a6a3a" letter-spacing="1.5">行政専門</text>
    <text x="84" y="45" font-size="13.5" font-weight="bold" fill="#1a6a3a" letter-spacing=".5">情報サービス</text>
    <rect x="101" y="47" width="9" height="9" fill="#3a8a4a"/>
    <text x="113" y="55.5" font-size="7.5" fill="#222" letter-spacing="-.4">47行政ジャーナル</text>
  </svg></div>
  <div class="bb" style="left:202px;top:126px;border:1px solid #ccc"><svg width="175" height="61" viewBox="0 0 175 61"><defs><filter id="b6"><feGaussianBlur stdDeviation=".7"/></filter></defs>
    <rect width="175" height="61" fill="#fffdf0"/>
    <text x="25" y="9" font-size="4.5" fill="#c8802a" text-anchor="middle">こだわりのおとりよせ</text>
    <circle cx="25" cy="28" r="14" fill="#f8e048" opacity=".8"/>
    <text x="25" y="37" font-size="22" fill="#e8a020" text-anchor="middle" font-family="Liberation Serif">47</text>
    <text x="25" y="47" font-size="8" font-weight="bold" fill="#c8802a" text-anchor="middle" font-family="Liberation Serif">CLUB</text>
    <g filter="url(#b6)">
    <rect x="51" y="0" width="42" height="32" fill="#e8ecd8"/><ellipse cx="72" cy="18" rx="18" ry="12" fill="#6a9a38"/>
    <rect x="93" y="0" width="42" height="32" fill="#8a3030"/><path d="M96 6 L130 4 L132 28 L98 26 Z" fill="#c05a50"/>
    <rect x="51" y="32" width="42" height="29" fill="#c8ccd0"/><circle cx="72" cy="46" r="12" fill="#e8eaec"/>
    <rect x="93" y="32" width="42" height="29" fill="#f0f0f0"/><path d="M98 40 L130 36 M100 48 L132 44 M102 56 L128 52" stroke="#e86a30" stroke-width="5" stroke-linecap="round"/>
    </g>
    <rect x="135" y="0" width="40" height="61" fill="#eef0e0"/>
    <circle cx="155" cy="17" r="15" fill="#e02030"/>
    <text x="155" y="14" font-size="10" fill="#fff" text-anchor="middle">日</text><text x="155" y="26" font-size="10" fill="#fff" text-anchor="middle">本</text>
    <text x="150" y="42" font-size="9" fill="#333" text-anchor="middle">愉</text><text x="150" y="54" font-size="9" fill="#333" text-anchor="middle">しむ</text><text x="164" y="46" font-size="8" fill="#333">を</text>
  </svg></div>
  <div class="bb" style="left:403px;top:126px;border:1px solid #dde2ea"><svg width="175" height="61" viewBox="0 0 175 61"><defs><linearGradient id="yg" x1="0" y1="0" x2="0" y2="1"><stop offset="0" stop-color="#ffffff"/><stop offset=".55" stop-color="#f4f8ea"/><stop offset="1" stop-color="#c0dc90"/></linearGradient></defs>
    <rect width="175" height="61" fill="url(#yg)"/>
    <path d="M0 42 Q70 30 175 42 V61 H0 Z" fill="#b8d880"/>
    <path d="M0 50 Q80 44 175 54 V61 H0 Z" fill="#a0c868"/>
    <circle cx="65" cy="19" r="17" fill="#7ab848" opacity=".9"/>
    <circle cx="55" cy="14" r="6" fill="#a8d070"/><circle cx="74" cy="12" r="6" fill="#98c860"/><circle cx="62" cy="27" r="6" fill="#a0cc68"/>
    <path d="M65 48 L64 28 M64 34 L56 26 M65 32 L73 25" stroke="#5a4a30" stroke-width="2"/>
    <text x="85" y="48" font-size="30" font-style="italic" fill="#7ab040" font-family="Liberation Serif">yell</text>
  </svg></div>
  <div class="bb" style="left:603px;top:126px;border:2px solid #d8c080"><svg width="173" height="59" viewBox="0 0 173 59">
    <rect width="173" height="59" fill="#f8f6ea"/>
    <circle cx="24" cy="27" r="20" fill="none" stroke="#333" stroke-width="1.8"/>
    <path d="M6 44 Q24 56 44 44" stroke="#333" stroke-width="2" fill="none"/>
    <text x="24" y="36" font-size="24" fill="#333" text-anchor="middle" font-family="Liberation Serif">祝</text>
    <circle cx="16" cy="12" r="2" fill="#e03020"/>
    <text x="48" y="45" font-size="27" fill="#444" font-family="Liberation Serif" letter-spacing="-2">号外</text>
    <rect x="103" y="3" width="68" height="53" fill="#fcfcf8"/>
    <text x="105" y="14" font-size="8" fill="#a8602a" letter-spacing="-.2">お祝いごとの際に</text>
    <text x="105" y="24" font-size="8" fill="#a8602a">オリジナルの</text>
    <text x="105" y="34" font-size="8" fill="#a8602a">記念新聞を</text>
    <text x="105" y="44" font-size="8" fill="#a8602a">作りませんか？</text>
    <text x="105" y="53" font-size="4.5" fill="#a8602a">結婚・出生・ご長寿・叙勲など</text>
  </svg></div>
  <div class="bb" style="left:803px;top:126px;border:2px solid #111"><svg width="173" height="59" viewBox="0 0 173 59">
    <rect width="173" height="59" fill="#111"/><rect x="1" y="1" width="171" height="39" fill="#ffe800"/>
    <text x="90" y="33" font-size="23" font-weight="bold" fill="#111" stroke="#111" stroke-width="2.2" text-anchor="middle" letter-spacing="3" transform="skewX(-8) translate(4,0)">ハレブタイ</text>
    <text x="87" y="52.5" font-size="8.5" font-weight="bold" fill="#fff" text-anchor="middle" letter-spacing="0">上毛新聞社のクラウドファンディング</text>
  </svg></div>

  <div class="bb" style="left:3px;top:210px;border:1px solid #e8e090"><svg width="175" height="61" viewBox="0 0 175 61"><defs><radialGradient id="lg" cx=".5" cy=".55" r=".7"><stop offset="0" stop-color="#fff48a"/><stop offset=".6" stop-color="#f8e020"/><stop offset="1" stop-color="#e8c800"/></radialGradient></defs>
    <rect width="175" height="61" fill="url(#lg)"/>
    <path d="M0 10 Q40 30 80 20 Q120 10 175 30" stroke="#fff8b0" stroke-width="6" fill="none" opacity=".6"/>
    <text x="93" y="28" font-size="14" font-weight="bold" fill="#1e3c4a" text-anchor="middle" letter-spacing="1">群馬弁護士会</text>
    <text x="91" y="46" font-size="15" font-weight="bold" fill="#1e3c4a" text-anchor="middle" letter-spacing="-.3">弁護士情報検索システム</text>
  </svg></div>
  <div class="bb" style="left:202px;top:210px;border:1px solid #555"><svg width="175" height="61" viewBox="0 0 175 61"><defs><filter id="b7"><feGaussianBlur stdDeviation="1"/></filter></defs>
    <rect width="175" height="61" fill="#202022"/>
    <g filter="url(#b7)">
    <path d="M10 0 Q18 20 30 30 Q25 50 45 61 L95 61 Q110 45 100 28 Q115 12 108 0 Z" fill="#7a604a"/>
    <path d="M30 10 Q60 25 95 8" stroke="#b89878" stroke-width="4" fill="none"/>
    <path d="M40 40 Q60 30 85 42" stroke="#a08060" stroke-width="4" fill="none"/>
    </g>
    <text x="12" y="19" font-size="8.5" fill="#fff">公益財団法人</text>
    <text x="90" y="35" font-size="12.5" fill="#fff" text-anchor="middle" font-weight="bold" letter-spacing="-.3">群馬県埋蔵文化財調査事業団</text>
    <text x="90" y="47" font-size="6" fill="#eee" text-anchor="middle" letter-spacing=".3">Gunma Archaeological Research Foundation</text>
  </svg></div>
  <div class="bb" style="left:403px;top:210px;border:1px solid #20a8e8"><svg width="175" height="61" viewBox="0 0 175 61">
    <rect width="175" height="61" fill="#12a6e6"/>
    <text x="5" y="26" font-size="15.5" font-weight="bold" fill="#fff" letter-spacing="-.6">ぐんま<tspan font-size="11">から</tspan>地球へ。</text>
    <text x="5" y="47" font-size="15" fill="#fff" letter-spacing="-1">ぐんまエコ宣言!2019</text>
    <circle cx="156" cy="30" r="16" fill="#1e4a9a"/>
    <text x="156" y="37" font-size="17" fill="#fff" text-anchor="middle" font-style="italic">ge</text>
  </svg></div>
</div>
<div id="copy" class="abs">Copyright © 2018 JOMO SHINBUN.</div>
</body>
</html>
